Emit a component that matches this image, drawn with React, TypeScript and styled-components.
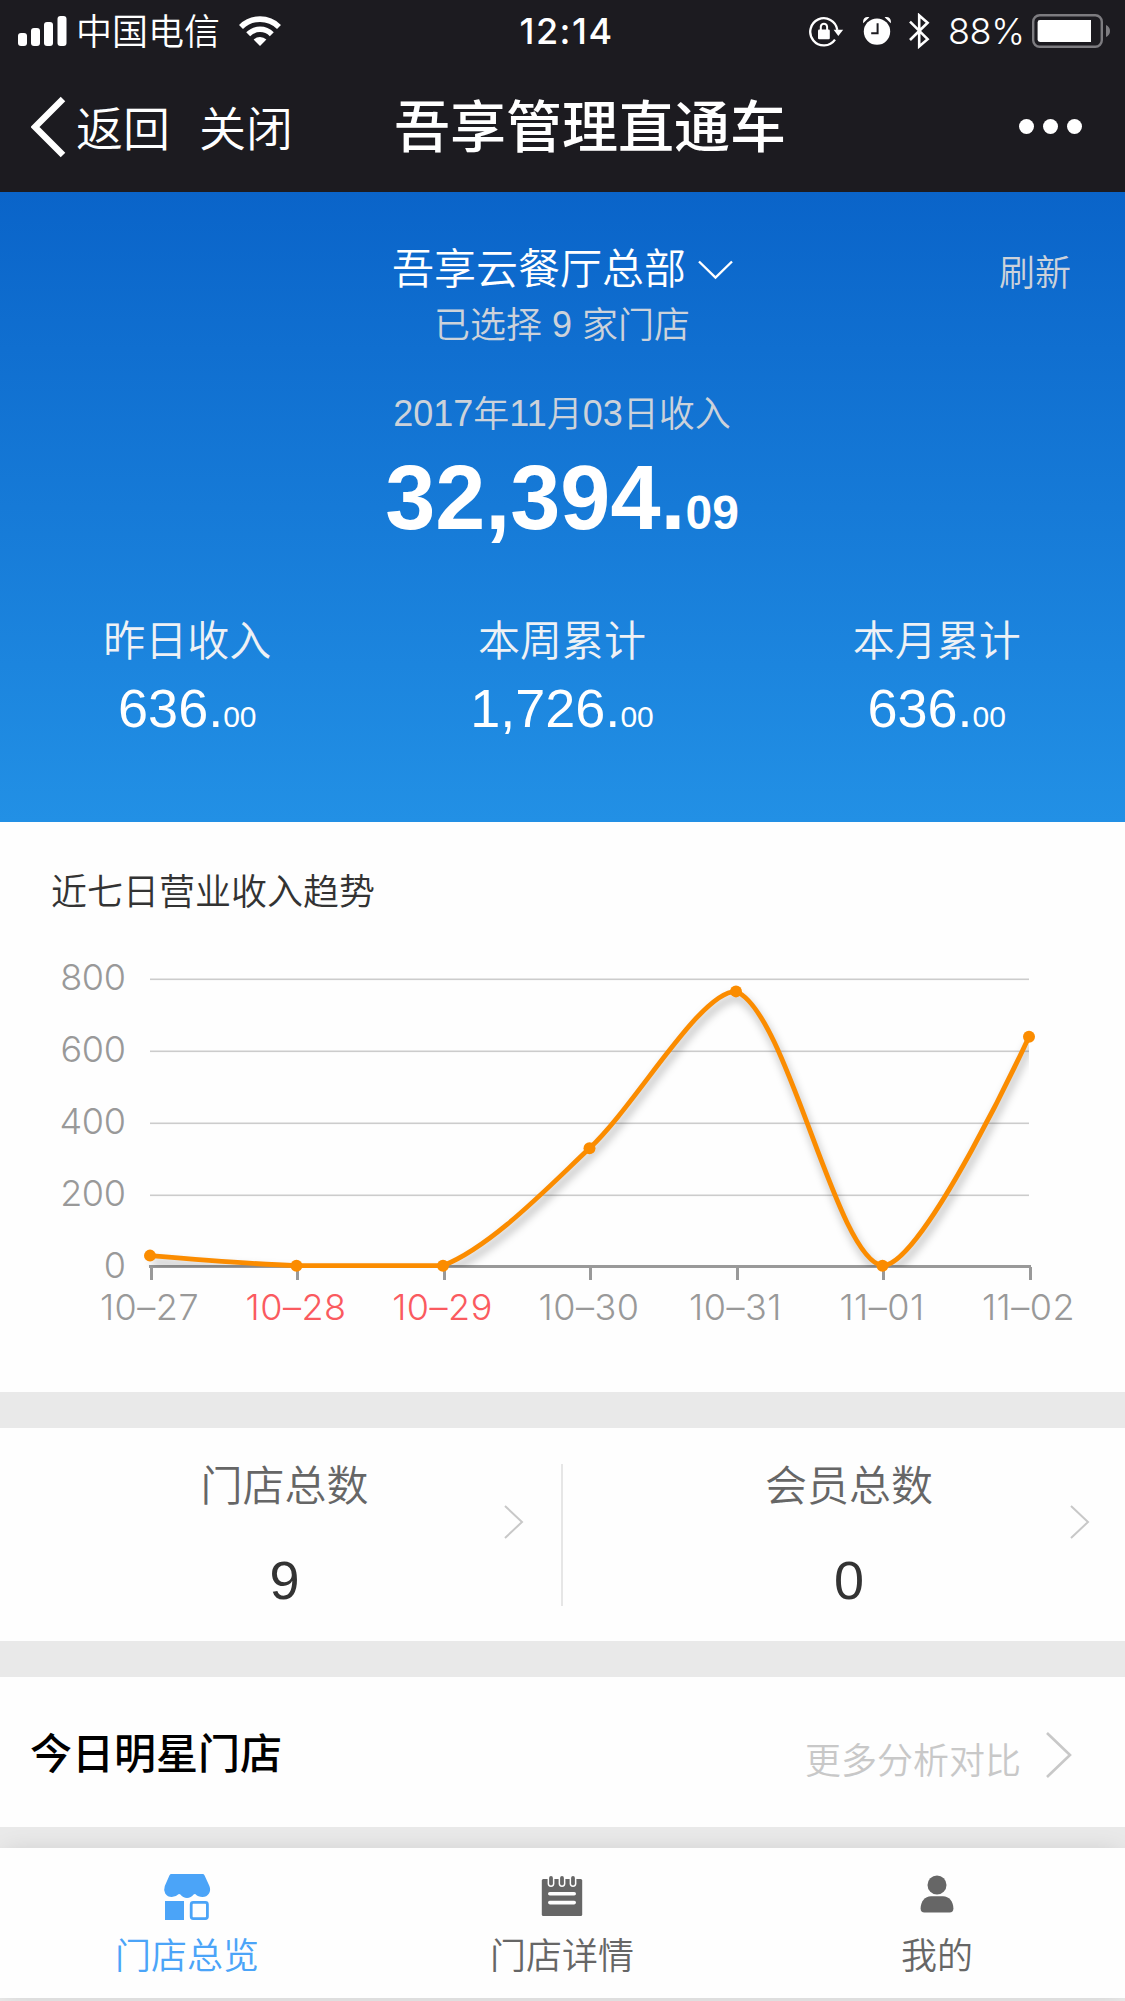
import React from "react";
import styled, { createGlobalStyle } from "styled-components";

const sans = `"Liberation Sans", "Noto Sans CJK SC", sans-serif`;
const inter = `Inter, "Noto Sans CJK SC", sans-serif`;

const GlobalStyle = createGlobalStyle`
  * { box-sizing: border-box; }
  body { margin: 0; background: #e9e9e9; font-family: ${sans}; }
`;

const Page = styled.div`
  width: 1125px;
  height: 2001px;
  display: flex;
  flex-direction: column;
  overflow: hidden;
  background: #e9e9e9;
  white-space: nowrap;
`;

/* ---------- status bar and navigation ---------- */

const TopBar = styled.header`
  height: 192px;
  flex: none;
  background: #1c1b20;
  color: #fff;
`;

const StatusBar = styled.div`
  height: 62px;
  padding: 0 15px 0 18px;
  display: grid;
  grid-template-columns: 1fr auto 1fr;
  align-items: center;
  font-family: ${inter};
  font-size: 36px;
  line-height: 40px;
`;

const StatusGroup = styled.div<{ $end?: boolean }>`
  display: flex;
  align-items: center;
  justify-content: ${(p) => (p.$end ? "flex-end" : "flex-start")};
`;

const Carrier = styled.span`
  margin: 0 19px 0 9px;
  padding-top: 4px;
  font-family: ${sans};
  font-weight: 350;
`;

const Clock = styled.span`
  padding-left: 5px;
  font-weight: 500;
  letter-spacing: 1.5px;
`;

const Percent = styled.span`
  width: 74px;
  margin: 0 10px 0 18px;
  font-weight: 300;
  letter-spacing: -0.4px;
`;

const NavBar = styled.nav`
  height: 130px;
  padding: 0 43px 0 31px;
  display: flex;
  align-items: center;
`;

const NavText = styled.span<{ $left: number }>`
  margin-left: ${(p) => p.$left}px;
  padding-top: 5px;
  font-size: 47px;
  line-height: 60px;
  font-weight: 350;
`;

const NavTitle = styled.h1`
  margin: 0 auto 0 101px;
  padding-top: 2px;
  font-size: 56px;
  line-height: 70px;
  font-weight: 500;
`;

const Dots = styled.div`
  padding-bottom: 1px;
  display: flex;
  gap: 9px;
`;

const Dot = styled.i`
  width: 15px;
  height: 15px;
  border-radius: 50%;
  background: #fff;
`;

/* ---------- revenue panel ---------- */

const Hero = styled.section`
  height: 630px;
  flex: none;
  padding-right: 1px;
  display: flex;
  flex-direction: column;
  background: linear-gradient(#0a64c9, #2290e5);
  color: #fff;
`;

const HeroHead = styled.div`
  padding: 51px 55px 0 56px;
  display: grid;
  grid-template-columns: 70px 1fr 70px;
  align-items: center;
`;

const StoreName = styled.div`
  grid-column: 2;
  display: flex;
  justify-content: center;
  align-items: center;
  gap: 12px;
  font-size: 42px;
  line-height: 52px;
  font-weight: 350;
`;

const Refresh = styled.span`
  padding-top: 9px;
  font-size: 36px;
  line-height: 44px;
  font-weight: 350;
  color: #ccd2da;
`;

const Muted = styled.div<{ $top: number }>`
  margin-top: ${(p) => p.$top}px;
  text-align: center;
  font-size: 36px;
  line-height: 44px;
  font-weight: 350;
  color: #ccd2da;
`;

const Digits = styled.span`
  vertical-align: 1px;
  line-height: 1;
`;

const Amount = styled.div`
  margin-top: 11px;
  text-align: center;
  font-size: 90px;
  line-height: 100px;
  font-weight: 700;
`;

const Cents = styled.span<{ $size: number }>`
  font-size: ${(p) => p.$size}px;
`;

const Stats = styled.div`
  margin-top: 53px;
  display: grid;
  grid-template-columns: repeat(3, 1fr);
  text-align: center;
`;

const StatLabel = styled.div`
  font-size: 42px;
  line-height: 52px;
  font-weight: 350;
  color: #eef1f5;
`;

const StatValue = styled.div`
  margin-top: 8px;
  font-size: 54px;
  line-height: 64px;
`;

/* ---------- white sections ---------- */

const Section = styled.section<{ $height: number; $gap: number }>`
  height: ${(p) => p.$height}px;
  margin-bottom: ${(p) => p.$gap}px;
  flex: none;
  background: #fefefe;
`;

const ChartTitle = styled.h2`
  margin: 0;
  padding: 49px 51px 0;
  font-size: 36px;
  line-height: 44px;
  font-weight: 350;
  color: #333;
`;

const ChartSvg = styled.svg`
  display: block;
  font-family: ${inter};
  font-size: 36px;
  font-weight: 330;
`;

const Totals = styled(Section)`
  display: grid;
  grid-template-columns: 563px 1fr;
  align-items: center;
`;

const TotalCell = styled.div<{ $divided?: boolean }>`
  height: 142px;
  padding: 0 ${(p) => (p.$divided ? 37 : 35)}px 0 8px;
  border-right: ${(p) => (p.$divided ? "2px solid #e6e6e6" : "0")};
  display: flex;
  align-items: flex-start;
`;

const TotalBody = styled.div`
  flex: 1;
  height: 142px;
  padding-left: 57px;
  text-align: center;
`;

const TotalLabel = styled.div`
  margin-top: -3px;
  font-size: 42px;
  line-height: 52px;
  font-weight: 350;
  color: #666;
`;

const TotalValue = styled.div`
  margin-top: 35px;
  font-size: 54px;
  line-height: 64px;
  color: #333;
`;

const TotalArrow = styled.span`
  display: flex;
  padding-top: 41px;
`;

const StarHead = styled(Section)`
  padding: 0 53px 0 30px;
  display: flex;
  align-items: center;
  justify-content: space-between;
`;

const StarTitle = styled.h2`
  margin: 0;
  padding-top: 5px;
  font-size: 42px;
  line-height: 52px;
  font-weight: 500;
  color: #000;
`;

const More = styled.div`
  padding-top: 6px;
  display: flex;
  align-items: center;
  gap: 25px;
  font-size: 36px;
  line-height: 44px;
  font-weight: 350;
  color: #c8c8c8;
`;

const MoreText = styled.span`
  padding-top: 14px;
`;

/* ---------- tab bar ---------- */

const TabBar = styled.footer`
  height: 150px;
  flex: none;
  display: grid;
  grid-template-columns: repeat(3, 1fr);
  background: #fefefe;
  box-shadow: 0 0 24px -6px rgba(0, 0, 0, 0.16);
`;

const Tab = styled.div<{ $active?: boolean }>`
  padding: 22px 1px 0 0;
  display: flex;
  flex-direction: column;
  align-items: center;
  color: ${(p) => (p.$active ? "#4ba4f8" : "#666")};
`;

const TabLabel = styled.span`
  margin-top: 13px;
  font-size: 36px;
  line-height: 44px;
  font-weight: 350;
`;

/* ---------- icons ---------- */

const Signal = () => (
  <svg width="49" height="30" viewBox="0 0 49 30" fill="#fff">
    <rect x="0" y="17" width="9" height="13" rx="3" />
    <rect x="13" y="12" width="9" height="18" rx="3" />
    <rect x="26" y="6" width="9" height="24" rx="3" />
    <rect x="39.5" y="0" width="9" height="30" rx="3" />
  </svg>
);

const Wifi = () => (
  <svg width="42" height="30" viewBox="0 0 42 30" fill="none" stroke="#fff" strokeWidth="5.6">
    <path d="M2 10.9A27 27 0 0 1 40 10.9" />
    <path d="M9.2 18.2A16.7 16.7 0 0 1 32.8 18.2" />
    <path d="M21 30L14.6 23.6A9.2 9.2 0 0 1 27.4 23.6Z" fill="#fff" stroke="none" />
  </svg>
);

const RotationLock = () => (
  <svg width="35" height="32" viewBox="0 0 35 32" fill="none" stroke="#fff" strokeWidth="2.3">
    <path d="M26 24.6A13.6 13.6 0 1 1 28.3 14.8" />
    <path d="M24.6 14.7H34.2L29.3 20.9Z" fill="#fff" stroke="none" />
    <rect x="9" y="14.6" width="11.8" height="9.6" rx="1.2" fill="#fff" stroke="none" />
    <path d="M11.8 15V11.6a3.2 3.4 0 0 1 6.3 0V15" strokeWidth="2" />
  </svg>
);

const Alarm = () => (
  <svg width="28" height="30" viewBox="0 0 28 30" fill="#fff">
    <circle cx="14" cy="15.6" r="13.2" />
    <path d="M0.2 7.2C-.6 2.6 2.4 0 6.4 1.2ZM27.8 7.2C28.6 2.6 25.6 0 21.6 1.2Z" />
    <path d="M14.6 7.2V17.2H8.2" fill="none" stroke="#1c1b20" strokeWidth="2" />
  </svg>
);

const Bluetooth = () => (
  <svg width="21" height="36" viewBox="0 0 21 36" fill="none" stroke="#fff" strokeWidth="2.6">
    <path d="M1 8.6L18.6 26.2L10.2 33.4V2.4L18.6 9.8L1 27" />
  </svg>
);

const Battery = () => (
  <svg width="78" height="34" viewBox="0 0 78 34">
    <rect x="1.2" y="1.2" width="68.6" height="31.6" rx="6.5" fill="none" stroke="#7d7c80" strokeWidth="2.4" />
    <path d="M8 6H59V28H8a2.4 2.4 0 0 1-2.4-2.4V8.400A2.400 2.400 0 0 1 8 6Z" fill="#fff" />
    <path d="M74 11C76.600 12 78 14.400 78 17C78 19.600 76.600 22 74 23Z" fill="#7d7c80" />
  </svg>
);

const Back = () => (
  <svg width="35" height="62" viewBox="0 0 35 62" fill="none" stroke="#fff" strokeWidth="6.4">
    <path d="M32 3L4 31L32 59" />
  </svg>
);

const Chevron = ({ width, height, stroke }: { width: number; height: number; stroke: number }) => (
  <svg width={width} height={height} viewBox={`0 0 ${width} ${height}`} fill="none" stroke="#c8c8c8" strokeWidth={stroke}>
    <path d={`M1 1L${width - 2} ${height / 2}L1 ${height - 1}`} />
  </svg>
);

const ChevronDown = () => (
  <svg width="35" height="20" viewBox="0 0 35 20" fill="none" stroke="#fff" strokeWidth="2.4">
    <path d="M1 1.500L17.500 17.500L34 1.500" />
  </svg>
);

const StoreIcon = () => (
  <svg width="48" height="52" viewBox="0 0 48 52" fill="currentColor">
    <path d="M8.500 4H39.500Q41 4 41.600 5.400L46.400 16Q48 20 46 23.500Q43.600 27 39.500 27Q35 27 32.600 24.300Q31.600 23.400 30.600 24.600Q28 28 24 28Q20 28 17.400 24.600Q16.400 23.400 15.400 24.300Q13 27 8.800 27Q4.500 27 2.200 23.500Q.4 20 1.800 16L6.400 5.400Q7 4 8.500 4Z" />
    <rect x="2" y="31" width="19" height="19" />
    <rect x="28.200" y="32.400" width="16.200" height="16.200" rx="2" fill="none" stroke="currentColor" strokeWidth="2.800" />
  </svg>
);

const NoteIcon = () => (
  <svg width="42" height="52" viewBox="0 0 42 52">
    <rect x="0.800" y="9" width="40.400" height="37" rx="1.500" fill="currentColor" />
    {[10, 21, 32].map((x) => (
      <g key={x}>
        <rect x={x - 3.4} y="6" width="6.800" height="11" rx="3.400" fill="#fefefe" />
        <rect x={x - 1.9} y="6" width="3.800" height="9.400" rx="1.900" fill="currentColor" />
      </g>
    ))}
    <rect x="7" y="22" width="28" height="3.600" rx="1.800" fill="#fefefe" />
    <rect x="7" y="30.800" width="28" height="3.600" rx="1.800" fill="#fefefe" />
  </svg>
);

const PersonIcon = () => (
  <svg width="34" height="52" viewBox="0 0 34 52" fill="currentColor">
    <circle cx="17" cy="15" r="9.500" />
    <path d="M.6 38.500C.6 31.500 5 26.200 11 26.200H23C29 26.200 33.400 31.500 33.400 38.500Q33.400 42.600 29.500 42.600H4.500Q.6 42.600 .6 38.500Z" />
  </svg>
);

/* ---------- chart ---------- */

const days = [
  { label: "10–27", value: 28 },
  { label: "10–28", value: 0, weekend: true },
  { label: "10–29", value: 0, weekend: true },
  { label: "10–30", value: 326 },
  { label: "10–31", value: 762 },
  { label: "11–01", value: 0 },
  { label: "11–02", value: 636 },
];

const LEFT = 150;
const STEP = 146.5;
const BASE = 350.7;
const UNIT = 72 / 200;
const SMOOTH = 0.3;

const points = days.map((d, i) => ({ x: LEFT + i * STEP, y: BASE - d.value * UNIT }));

type Point = { x: number; y: number };

function smoothPath(ps: Point[]) {
  const top = Math.min(...ps.map((p) => p.y));
  const clamp = (y: number) => Math.max(top, Math.min(BASE, y));
  const controls = ps.map((p, i) => {
    const prev = ps[i - 1];
    const next = ps[i + 1];
    if (!prev || !next) return { before: p, after: p };
    const d0 = Math.hypot(p.x - prev.x, p.y - prev.y);
    const d1 = Math.hypot(next.x - p.x, next.y - p.y);
    const vx = (next.x - prev.x) * SMOOTH;
    const vy = (next.y - prev.y) * SMOOTH;
    const r = d0 / (d0 + d1);
    return {
      before: { x: p.x - vx * r, y: clamp(p.y - vy * r) },
      after: { x: p.x + vx * (1 - r), y: clamp(p.y + vy * (1 - r)) },
    };
  });
  return ps.reduce((path, p, i) => {
    if (i === 0) return `M${p.x} ${p.y}`;
    const a = controls[i - 1].after;
    const b = controls[i].before;
    return `${path}C${a.x} ${a.y} ${b.x} ${b.y} ${p.x} ${p.y}`;
  }, "");
}

const TrendChart = () => {
  const line = smoothPath(points);
  return (
    <ChartSvg width="1125" height="470" viewBox="0 0 1125 470">
      <defs>
        <clipPath id="plot">
          <rect x="144" y="0" width="885" height="352" />
        </clipPath>
        <filter id="soft" x="-5%" y="-10%" width="110%" height="125%">
          <feGaussianBlur stdDeviation="4" />
        </filter>
      </defs>
      {[0, 1, 2, 3, 4].map((n) => (
        <g key={n}>
          {n > 0 && <rect x="150" y={351 - n * 72 + 0.5} width="879" height="1.600" fill="#ccc" />}
          <text x="125.500" y={363.3 - n * 72} textAnchor="end" letterSpacing="-0.4" fill="#999">
            {n * 200}
          </text>
        </g>
      ))}
      <rect x="149" y="350" width="882" height="3" fill="#999" />
      {points.map((p, i) => (
        <rect key={i} x={Math.round(p.x - 0.5)} y="352" width="3" height="13" fill="#999" />
      ))}
      <g clipPath="url(#plot)">
        <path d={line} transform="translate(2 6)" fill="none" stroke="#000" strokeOpacity="0.3" strokeWidth="5" filter="url(#soft)" />
      </g>
      <path d={line} fill="none" stroke="#fb8c00" strokeWidth="4.800" strokeLinejoin="round" />
      {points.map((p, i) => (
        <circle key={i} cx={p.x} cy={p.y} r="6" fill="#fb8c00" />
      ))}
      {days.map((d, i) => (
        <text key={d.label} x={points[i].x - 0.5} y="404.800" textAnchor="middle" letterSpacing="0.5" fill={d.weekend ? "#fa5a5f" : "#999"}>
          {d.label}
        </text>
      ))}
    </ChartSvg>
  );
};

/* ---------- page ---------- */

const stats = [
  ["昨日收入", "636."],
  ["本周累计", "1,726."],
  ["本月累计", "636."],
];

export default function App() {
  return (
    <Page>
      <GlobalStyle />
      <TopBar>
        <StatusBar>
          <StatusGroup>
            <Signal />
            <Carrier>中国电信</Carrier>
            <Wifi />
          </StatusGroup>
          <Clock>12:14</Clock>
          <StatusGroup $end>
            <RotationLock />
            <svg width="19" height="1" />
            <Alarm />
            <svg width="18" height="1" />
            <Bluetooth />
            <Percent>88%</Percent>
            <Battery />
          </StatusGroup>
        </StatusBar>
        <NavBar>
          <Back />
          <NavText $left={10}>返回</NavText>
          <NavText $left={29}>关闭</NavText>
          <NavTitle>吾享管理直通车</NavTitle>
          <Dots>
            <Dot />
            <Dot />
            <Dot />
          </Dots>
        </NavBar>
      </TopBar>

      <Hero>
        <HeroHead>
          <StoreName>
            吾享云餐厅总部
            <ChevronDown />
          </StoreName>
          <Refresh>刷新</Refresh>
        </HeroHead>
        <Muted $top={8}>
          已选择 <Digits>9</Digits> 家门店
        </Muted>
        <Muted $top={45}>
          <Digits>2017</Digits>年<Digits>11</Digits>月<Digits>03</Digits>日收入
        </Muted>
        <Amount>
          32,394.<Cents $size={48}>09</Cents>
        </Amount>
        <Stats>
          {stats.map(([label, value]) => (
            <div key={label}>
              <StatLabel>{label}</StatLabel>
              <StatValue>
                {value}
                <Cents $size={30}>00</Cents>
              </StatValue>
            </div>
          ))}
        </Stats>
      </Hero>

      <Section $height={570} $gap={36}>
        <ChartTitle>近七日营业收入趋势</ChartTitle>
        <TrendChart />
      </Section>

      <Totals $height={213} $gap={36}>
        <TotalCell $divided>
          <TotalBody>
            <TotalLabel>门店总数</TotalLabel>
            <TotalValue>9</TotalValue>
          </TotalBody>
          <TotalArrow>
            <Chevron width={20} height={34} stroke={2} />
          </TotalArrow>
        </TotalCell>
        <TotalCell>
          <TotalBody>
            <TotalLabel>会员总数</TotalLabel>
            <TotalValue>0</TotalValue>
          </TotalBody>
          <TotalArrow>
            <Chevron width={20} height={34} stroke={2} />
          </TotalArrow>
        </TotalCell>
      </Totals>

      <StarHead $height={150} $gap={21}>
        <StarTitle>今日明星门店</StarTitle>
        <More>
          <MoreText>更多分析对比</MoreText>
          <Chevron width={26} height={46} stroke={2.6} />
        </More>
      </StarHead>

      <TabBar>
        <Tab $active>
          <StoreIcon />
          <TabLabel>门店总览</TabLabel>
        </Tab>
        <Tab>
          <NoteIcon />
          <TabLabel>门店详情</TabLabel>
        </Tab>
        <Tab>
          <PersonIcon />
          <TabLabel>我的</TabLabel>
        </Tab>
      </TabBar>
    </Page>
  );
}
